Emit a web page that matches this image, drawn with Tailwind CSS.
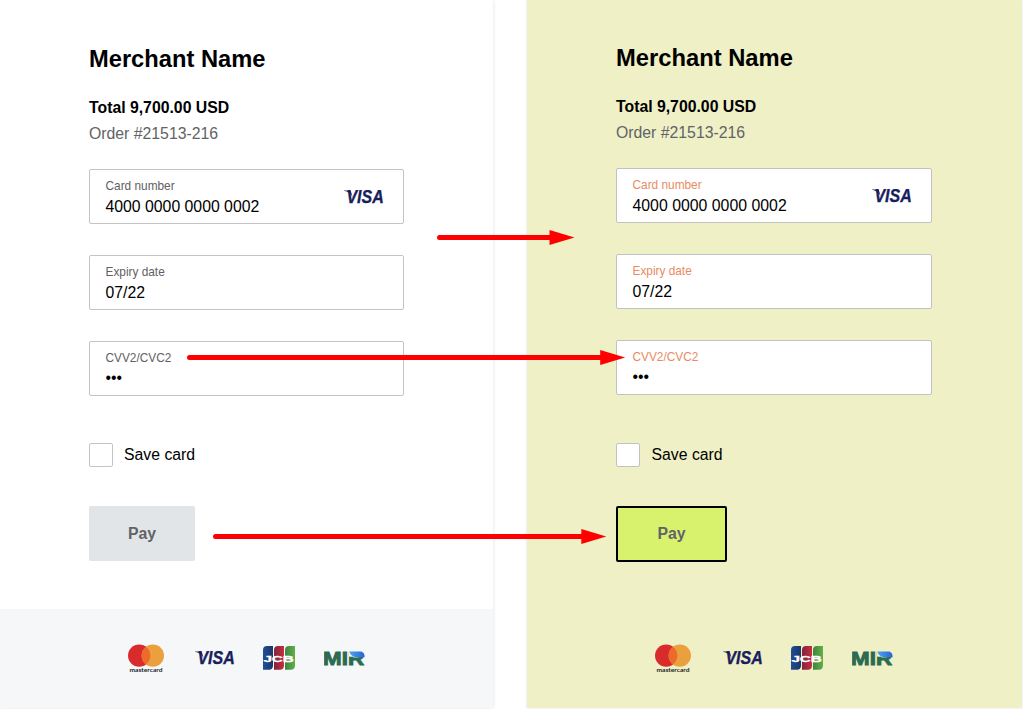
<!DOCTYPE html>
<html lang="en">
<head>
<meta charset="utf-8">
<title>Merchant payment page</title>
<script src="https://cdn.jsdelivr.net/npm/@tailwindcss/browser@4"></script>
</head>
<body class="relative h-[709px] w-[1023px] overflow-hidden bg-white font-['Liberation_Sans',Arial,sans-serif] text-[15.8px] text-black">

<svg class="absolute h-0 w-0">
  <defs>
    <linearGradient id="jb"><stop offset="0" stop-color="#1f4f96"/><stop offset="1" stop-color="#1d3568"/></linearGradient>
    <linearGradient id="jr"><stop offset="0" stop-color="#7d2440"/><stop offset="1" stop-color="#cb2c3e"/></linearGradient>
    <linearGradient id="jg"><stop offset="0" stop-color="#3c8540"/><stop offset="1" stop-color="#62b04a"/></linearGradient>
    <linearGradient id="mb"><stop offset="0" stop-color="#4ba3ee"/><stop offset="1" stop-color="#2b63d6"/></linearGradient>
    <clipPath id="mirclip"><path d="M-1 0H25V5.8H41V15H-1Z"/></clipPath>
    <symbol id="visa" viewBox="0 0 40 14">
      <path d="M0 0.5H6.6L8.6 7C6.8 3.4 3.8 1.5 0 0.8Z" fill="#191e5d"/>
      <text x="2.4" y="13.1" textLength="37.4" lengthAdjust="spacingAndGlyphs" font-family="Liberation Sans, sans-serif" font-weight="700" font-style="italic" font-size="17.8" fill="#191e5d" stroke="#191e5d" stroke-width="0.3">VISA</text>
    </symbol>
    <symbol id="mastercard" viewBox="0 0 36 30">
      <circle cx="11.2" cy="11.6" r="11.2" fill="#d92b2b"/>
      <circle cx="24.8" cy="11.6" r="11.2" fill="#eba03e"/>
      <path d="M18 2.7a11.2 11.2 0 0 1 0 17.8a11.2 11.2 0 0 1 0-17.8Z" fill="#ed6a2d"/>
      <text x="1.5" y="28.1" textLength="33" lengthAdjust="spacingAndGlyphs" font-family="Lato, sans-serif" font-weight="700" font-size="6.3" fill="#202124">mastercard</text>
    </symbol>
    <symbol id="jcb" viewBox="0 0 32 24">
      <path d="M4 0H10V20a4 4 0 0 1-4 3.7H0V4A4 4 0 0 1 4 0Z" fill="url(#jb)"/>
      <path d="M15 0H21V20a4 4 0 0 1-4 3.7H11V4A4 4 0 0 1 15 0Z" fill="url(#jr)"/>
      <path d="M26 0H32V20a4 4 0 0 1-4 3.7H22V4A4 4 0 0 1 26 0Z" fill="url(#jg)"/>
      <text x="0.4" y="15.6" textLength="30.5" lengthAdjust="spacingAndGlyphs" font-family="Liberation Sans, sans-serif" font-weight="700" font-size="9.8" fill="#fff" stroke="#fff" stroke-width="0.35">JCB</text>
    </symbol>
    <symbol id="mir" viewBox="0 0 41 15">
      <g clip-path="url(#mirclip)">
        <text x="-0.9" y="14" textLength="41" lengthAdjust="spacingAndGlyphs" font-family="Liberation Sans, sans-serif" font-weight="700" font-size="18.6" fill="#2d6b50" stroke="#2d6b50" stroke-width="0.9">MIR</text>
      </g>
      <path d="M25.4 0.4H36.4C39 0.4 40.8 2.6 40.6 6.2H33C29 6 26 3.8 25.4 0.4Z" fill="url(#mb)"/>
    </symbol>
  </defs>
</svg>

<main class="flex h-full">
  <section class="flex h-[708px] w-[493px] shrink-0 flex-col shadow-[0_0_4px_rgba(0,0,0,0.12)]">
    <div class="h-[609px] pl-[89px] pt-[44px]">
      <h1 class="h-[30px] text-[23.7px] font-bold leading-[30px]">Merchant Name</h1>
      <p class="mt-[24px] h-5 font-bold leading-5">Total 9,700.00 USD</p>
      <p class="mt-[6px] h-5 leading-5 text-[#626366]">Order #21513-216</p>
      <div class="mt-[25px] flex w-[315px] flex-col gap-[31px]">
        <div class="flex h-[55px] items-center justify-between rounded-[2px] border border-[#c4c4c4] bg-white pl-[15.5px] pr-[19px]">
          <div class="pt-[2px]"><p class="h-[14px] text-[11.85px] leading-[14px] text-[#5f6062]">Card number</p><p class="mt-1 h-5 leading-5">4000 0000 0000 0002</p></div>
          <svg class="h-[14px] w-10"><use href="#visa"/></svg>
        </div>
        <div class="flex h-[55px] items-center rounded-[2px] border border-[#c4c4c4] bg-white pl-[15.5px]">
          <div class="pt-[2px]"><p class="h-[14px] text-[11.85px] leading-[14px] text-[#5f6062]">Expiry date</p><p class="mt-1 h-5 leading-5">07/22</p></div>
        </div>
        <div class="flex h-[55px] items-center rounded-[2px] border border-[#c4c4c4] bg-white pl-[15.5px]">
          <div class="pt-px"><p class="h-[14px] text-[11.85px] leading-[14px] text-[#5f6062]">CVV2/CVC2</p><p class="mt-[3px] h-5 leading-5">•••</p></div>
        </div>
      </div>
      <div class="mt-[47px] flex h-6 items-center gap-3">
        <span class="-mr-[0.5px] h-6 w-[23.5px] rounded-[2px] border border-[#c4c4c4] bg-white"></span>
        <span class="leading-5">Save card</span>
      </div>
      <button class="mt-[39px] block h-[55px] w-[106px] rounded-[2px] bg-[#e1e5e8] font-bold text-[#626366]">Pay</button>
    </div>
    <footer class="flex h-[99px] items-start bg-[#f5f7f9] pl-32 pt-[35px]">
      <svg class="h-[30px] w-9"><use href="#mastercard"/></svg>
      <svg class="ml-[31px] mt-[7px] h-[14px] w-10"><use href="#visa"/></svg>
      <svg class="ml-[28px] mt-[2px] h-6 w-8"><use href="#jcb"/></svg>
      <svg class="ml-[29px] mt-[7px] h-[15px] w-[41px]"><use href="#mir"/></svg>
    </footer>
  </section>

  <section class="ml-[34px] h-[708px] w-[495px] shrink-0 bg-[#eff0c6] pl-[89px] pt-[43px] shadow-[0_0_3px_rgba(0,0,0,0.12)]">
    <h1 class="h-[30px] text-[23.75px] font-bold leading-[30px]">Merchant Name</h1>
    <p class="mt-[24px] h-5 font-bold leading-5">Total 9,700.00 USD</p>
    <p class="mt-[6px] h-5 leading-5 text-[#626366]">Order #21513-216</p>
    <div class="mt-[25px] flex w-[316px] flex-col gap-[31px]">
      <div class="flex h-[55px] items-center justify-between rounded-[2px] border border-[#c2c2c2] bg-white pl-[15.5px] pr-[19px]">
        <div class="pt-[2px]"><p class="h-[14px] text-[11.85px] leading-[14px] text-[#e98b61]">Card number</p><p class="mt-1 h-5 text-[15.85px] leading-5">4000 0000 0000 0002</p></div>
        <svg class="h-[14px] w-10"><use href="#visa"/></svg>
      </div>
      <div class="flex h-[55px] items-center rounded-[2px] border border-[#c2c2c2] bg-white pl-[15.5px]">
        <div class="pt-[2px]"><p class="h-[14px] text-[11.85px] leading-[14px] text-[#e98b61]">Expiry date</p><p class="mt-1 h-5 text-[15.85px] leading-5">07/22</p></div>
      </div>
      <div class="flex h-[55px] items-center rounded-[2px] border border-[#c2c2c2] bg-white pl-[15.5px]">
        <div class="pt-[2px]"><p class="h-[14px] text-[11.85px] leading-[14px] text-[#e98b61]">CVV2/CVC2</p><p class="mt-[3px] h-5 leading-5">•••</p></div>
      </div>
    </div>
    <div class="mt-[48px] flex h-6 items-center gap-3">
      <span class="-mr-[0.5px] h-6 w-6 rounded-[2px] border border-[#c2c2c2] bg-white"></span>
      <span class="leading-5">Save card</span>
    </div>
    <button class="mt-[39px] block h-[56px] w-[111px] rounded-[2px] border-2 border-black bg-[#d8f26e] font-bold text-[#626366]">Pay</button>
    <footer class="mt-[82px] flex items-start pl-[39px]">
      <svg class="h-[30px] w-9"><use href="#mastercard"/></svg>
      <svg class="ml-[32px] mt-[7px] h-[14px] w-10"><use href="#visa"/></svg>
      <svg class="ml-[28px] mt-[2px] h-6 w-8"><use href="#jcb"/></svg>
      <svg class="ml-[29px] mt-[7px] h-[15px] w-[41px]"><use href="#mir"/></svg>
    </footer>
  </section>
</main>

<svg class="absolute left-0 top-0" width="1023" height="709" fill="#ff0000" stroke="#ff0000" stroke-linecap="round">
  <path d="M439.5 237.5H552M189.5 357.5H603M215.5 536.5H584" stroke-width="5" fill="none"/>
  <path d="M549.5 230L574.5 237.5L549.5 245ZM600.2 350L625.2 357.5L600.2 365ZM581.3 529L606.3 536.5L581.3 544Z" stroke="none"/>
</svg>
</body>
</html>
